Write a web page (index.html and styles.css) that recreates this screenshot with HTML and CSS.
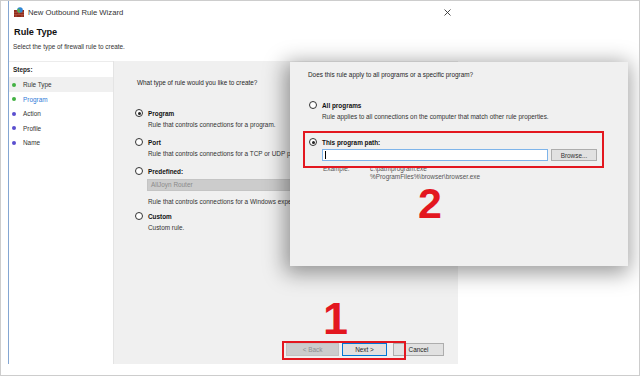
FILE: index.html
```html
<!DOCTYPE html>
<html lang="en">
<head>
  <meta charset="UTF-8" />
  <title>New Outbound Rule Wizard</title>
  <link rel="stylesheet" href="styles.css">
</head>
<body>
  <div class="screen">
    <div class="window">
      <div class="titlebar">
        <svg class="app-icon" width="10" height="10" viewBox="0 0 10 10">
          <rect x="0" y="3" width="10" height="7" fill="#8e2b1c" />
          <path d="M0 5.3h10M0 7.6h10M3 3v2.3M7 3v2.3M5 5.3v2.3M2 7.6v2.4M8 7.6v2.4" stroke="#c0654f" stroke-width="0.6" />
          <circle cx="6" cy="3" r="2.8" fill="#2f86d6" />
          <path d="M4.6 1.4c1 .3 1.4 1 .9 1.8-.5.6.2 1.4 1 1.5l-.6 1C4.2 5.5 3.2 4 3.4 2.7z" fill="#5bb43f" />
        </svg>
        <span class="title">New Outbound Rule Wizard</span>
        <svg class="close" width="7" height="7" viewBox="0 0 7 7">
          <path d="M0.5 0.5l6 6M6.5 0.5l-6 6" stroke="#333" stroke-width="0.9" />
        </svg>
      </div>

      <h1 class="page-title">Rule Type</h1>
      <p class="page-sub">Select the type of firewall rule to create.</p>

      <div class="panels">
        <div class="steps">
          <div class="steps-head">Steps:</div>
          <div class="step current"><span class="dot done"></span>Rule Type</div>
          <div class="step"><span class="dot done"></span><span class="active">Program</span></div>
          <div class="step"><span class="dot"></span>Action</div>
          <div class="step"><span class="dot"></span>Profile</div>
          <div class="step"><span class="dot"></span>Name</div>
        </div>

        <div class="main">
          <p class="question">What type of rule would you like to create?</p>
          <div class="options">
            <div class="option">
              <div class="opt-label"><span class="radio checked"></span>Program</div>
              <div class="opt-desc">Rule that controls connections for a program.</div>
            </div>
            <div class="option">
              <div class="opt-label"><span class="radio"></span>Port</div>
              <div class="opt-desc">Rule that controls connections for a TCP or UDP port.</div>
            </div>
            <div class="option">
              <div class="opt-label"><span class="radio"></span>Predefined:</div>
              <div class="select">AllJoyn Router</div>
              <div class="opt-desc spaced">Rule that controls connections for a Windows experience.</div>
            </div>
            <div class="option">
              <div class="opt-label"><span class="radio"></span>Custom</div>
              <div class="opt-desc">Custom rule.</div>
            </div>
          </div>

          <div class="buttons">
            <button class="btn disabled">&lt; Back</button>
            <button class="btn primary">Next &gt;</button>
            <button class="btn cancel">Cancel</button>
          </div>
        </div>
      </div>
    </div>

    <!-- screenshot of the Program page laid over the wizard -->
    <div class="inset">
      <p class="inset-question">Does this rule apply to all programs or a specific program?</p>
      <div class="inset-option">
        <div class="opt-label"><span class="radio"></span>All programs</div>
        <div class="opt-desc">Rule applies to all connections on the computer that match other rule properties.</div>
      </div>
      <div class="inset-option path">
        <div class="opt-label"><span class="radio checked"></span>This program path:</div>
        <div class="path-row">
          <div class="path-input"><span class="caret"></span></div>
          <button class="btn browse">Browse...</button>
        </div>
        <div class="example">
          <span class="ex-label">Example:</span>
          <span class="ex-paths">c:\path\program.exe<br>%ProgramFiles%\browser\browser.exe</span>
        </div>
      </div>
    </div>

    <div class="mark box-path"></div>
    <div class="mark box-buttons"></div>
    <div class="num num-two">2</div>
    <div class="num num-one">1</div>
  </div>
</body>
</html>
```

FILE: styles.css
```css
* {
  box-sizing: border-box;
}
body {
  margin: 0;
  font-family: "Liberation Sans", Arial, sans-serif;
  font-size: 6.4px;
  color: #1f1f1f;
}
p {
  margin: 0;
}
.screen {
  position: relative;
  width: 640px;
  height: 376px;
  border: 1px solid #cdcdcd;
  background: #fff;
  overflow: hidden;
}
.window {
  display: flex;
  flex-direction: column;
  width: 450px;
  height: 363px;
  margin-left: 7px;
  border-left: 1px solid #84a6d2;
}
.titlebar {
  display: flex;
  align-items: center;
  height: 23px;
  padding-left: 5px;
  padding-right: 7px;
}
.app-icon {
  margin-top: -1px;
}
.title {
  margin-left: 4px;
  font-size: 7.7px;
  color: #333;
}
.close {
  margin-left: auto;
}
.page-title {
  margin: 2px 0 0 5px;
  font-size: 9.2px;
  line-height: 12px;
  font-weight: bold;
  color: #111;
}
.page-sub {
  margin: 4px 0 0 4px;
  line-height: 10px;
  color: #333;
}
.panels {
  display: flex;
  flex: 1;
  margin-top: 9px;
}
.steps {
  width: 105px;
  border-right: 1px solid #e4e4e4;
  background: #fff;
}
.steps-head {
  height: 16px;
  line-height: 16px;
  padding-left: 4px;
  font-weight: bold;
  border-top: 1px solid #ececec;
}
.step {
  display: flex;
  align-items: center;
  height: 14.5px;
  padding-left: 3px;
  color: #333;
}
.step.current {
  height: 15px;
  background: #f0f0f0;
}
.dot {
  width: 4px;
  height: 4px;
  margin-right: 7px;
  border-radius: 50%;
  background: #5a4fcf;
}
.dot.done {
  background: #43b143;
}
.active {
  color: #2f7bd8;
}
.main {
  display: flex;
  flex-direction: column;
  width: 344px;
  background: #f0f0f0;
  padding: 15.5px 14px 8px 21px;
}
.question {
  line-height: 11px;
  padding-left: 2px;
}
.options {
  margin-top: 20px;
}
.option {
  margin-bottom: 7px;
}
.opt-label {
  display: flex;
  align-items: center;
  line-height: 11px;
  font-weight: bold;
  color: #111;
}
.opt-desc {
  line-height: 11px;
  padding-left: 13px;
  color: #333;
  white-space: nowrap;
}
.opt-desc.spaced {
  margin-top: 4.5px;
}
.option:nth-child(3) {
  margin-bottom: 4px;
}
.radio {
  position: relative;
  width: 8px;
  height: 8px;
  margin-right: 5px;
  border: 1px solid #333;
  border-radius: 50%;
  background: #fff;
}
.radio.checked::after {
  content: "";
  position: absolute;
  top: 1.5px;
  left: 1.5px;
  width: 3px;
  height: 3px;
  border-radius: 50%;
  background: #222;
}
.select {
  width: 290px;
  height: 12px;
  margin: 2.5px 0 0 12px;
  padding-left: 3px;
  line-height: 10px;
  background: #cccccc;
  border: 1px solid #c4c4c4;
  color: #8b8b8b;
}
.buttons {
  display: flex;
  justify-content: flex-end;
  margin-top: auto;
}
.btn {
  height: 13px;
  padding: 0;
  font-family: inherit;
  font-size: 6.4px;
  line-height: 11px;
  color: #1f1f1f;
  background: #e1e1e1;
  border: 1px solid #adadad;
}
.btn.disabled {
  width: 53px;
  color: #8e8e8e;
  background: #cccccc;
  border-color: #c2c2c2;
}
.btn.primary {
  width: 45px;
  margin-left: 3px;
  border-color: #0078d7;
}
.btn.cancel {
  width: 51px;
  margin-left: 6px;
}
.inset {
  position: absolute;
  left: 289px;
  top: 61px;
  width: 338px;
  height: 204px;
  padding: 6.5px 0 0 18px;
  background: #f0f0f0;
  box-shadow: -2px 4px 20px 3px rgba(0, 0, 0, 0.4);
}
.inset-question {
  line-height: 11px;
}
.inset-option {
  margin-top: 20px;
  margin-left: 1px;
}
.inset-option.path {
  margin-top: 15px;
}
.path-row {
  display: flex;
  margin: 1.5px 0 0 13px;
}
.path-input {
  display: flex;
  align-items: center;
  width: 226px;
  height: 12px;
  padding-left: 2px;
  background: #fff;
  border: 1px solid #7eb4ea;
}
.caret {
  width: 1px;
  height: 8px;
  background: #000;
}
.btn.browse {
  width: 46px;
  height: 12px;
  margin-left: 3px;
  color: #333;
}
.example {
  display: flex;
  margin: 4px 0 0 14px;
  line-height: 8px;
  color: #555;
}
.ex-label {
  width: 47px;
}
.mark {
  position: absolute;
  border: 2px solid #e3171f;
}
.box-path {
  left: 302px;
  top: 130px;
  width: 301px;
  height: 37px;
}
.box-buttons {
  left: 281px;
  top: 340px;
  width: 124px;
  height: 19px;
}
.num {
  position: absolute;
  font-weight: bold;
  line-height: 0.8;
  color: #e3171f;
}
.num-two {
  left: 417px;
  top: 185px;
  font-size: 43px;
}
.num-one {
  left: 322px;
  top: 300px;
  font-size: 45px;
}
```
